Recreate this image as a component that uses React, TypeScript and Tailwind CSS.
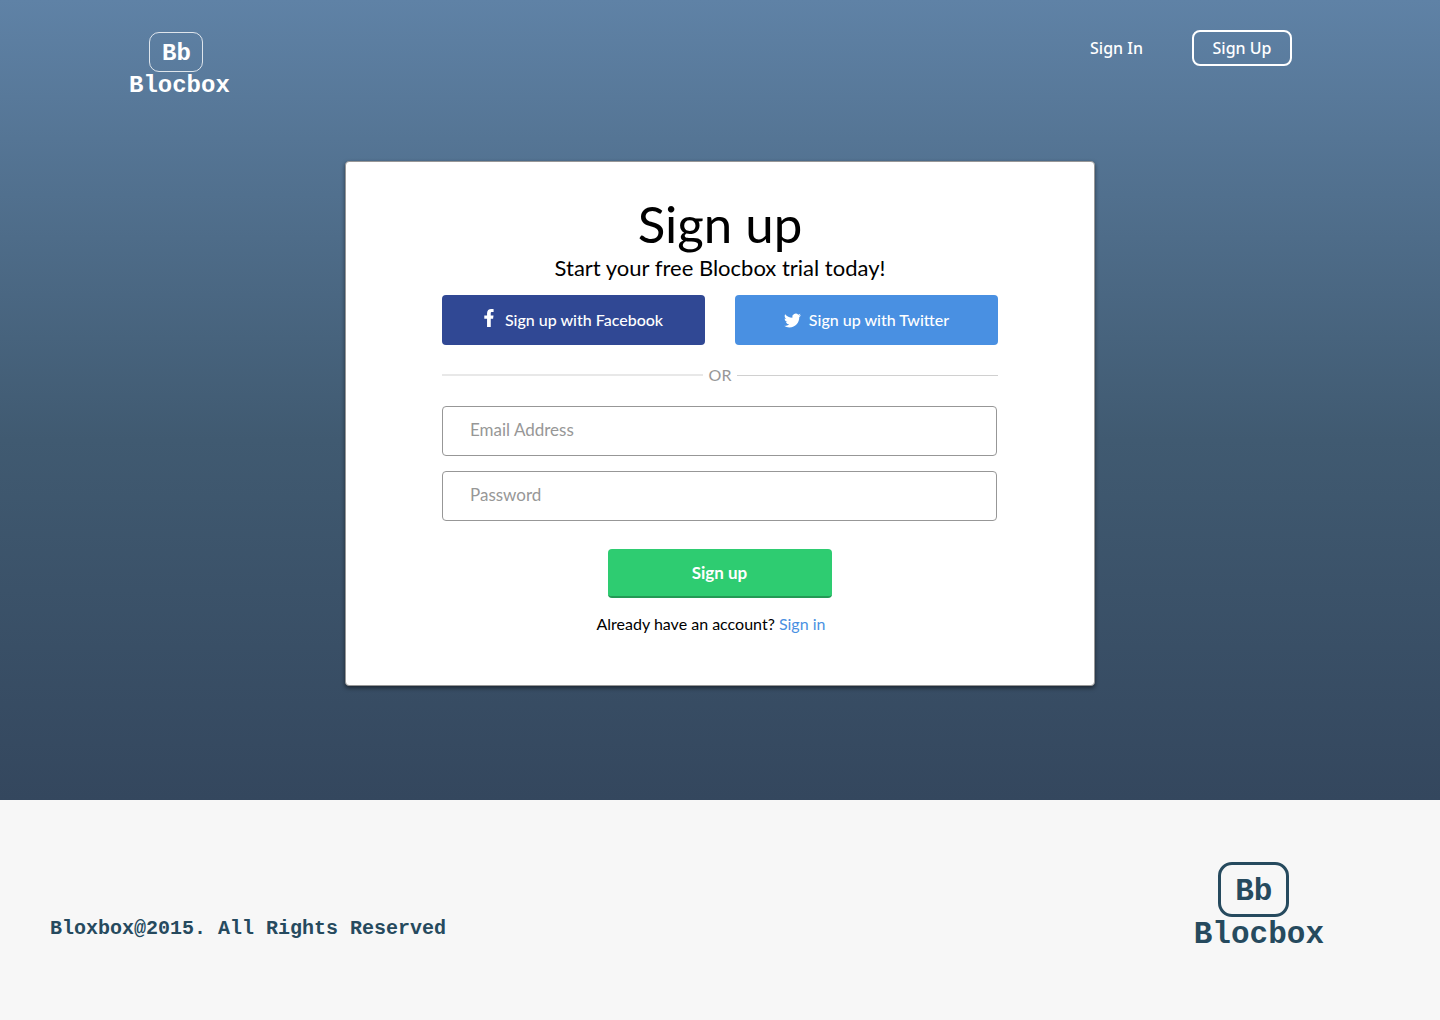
type LogoProps = { size: 'small' | 'large' };

function Logo({ size }: LogoProps) {
  const small = size === 'small';
  return (
    <a
      href="#"
      aria-label="Blocbox home"
      className={
        small
          ? 'flex flex-col items-center text-2xl leading-7 text-white'
          : 'flex flex-col items-center text-[31px] leading-9 text-[#264a5e]'
      }
    >
      <span
        className={
          small
            ? 'mr-1.5 flex h-10 w-[54px] items-center justify-center rounded-[10px] border border-white/80 pt-1'
            : 'mr-2.5 flex h-[55px] w-[71px] items-center justify-center rounded-[14px] border-3 border-[#264a5e] pt-1'
        }
      >
        Bb
      </span>
      <span>Blocbox</span>
    </a>
  );
}

function FacebookIcon() {
  return (
    <svg viewBox="0 0 10 18" className="mb-1 h-[18px] w-[10px]" fill="currentColor" aria-hidden="true">
      <path d="M9.6.15v2.95H8.1c-1.1 0-1.35.52-1.35 1.42v2h2.75l-.42 3.18H6.75V18H3.05V9.7H.3V6.52h2.75V4.2C3.05 1.47 4.72 0 7.15 0c1.16 0 2.16.08 2.45.15z" />
    </svg>
  );
}

function TwitterIcon() {
  return (
    <svg viewBox="0 0 24 24" className="size-[17px]" fill="currentColor" aria-hidden="true">
      <path d="M23.954 4.569a10 10 0 0 1-2.825.775 4.958 4.958 0 0 0 2.163-2.723 9.99 9.99 0 0 1-3.127 1.184 4.92 4.92 0 0 0-8.384 4.482C7.691 8.094 4.066 6.13 1.64 3.161a4.822 4.822 0 0 0-.666 2.475c0 1.71.87 3.213 2.188 4.096a4.904 4.904 0 0 1-2.228-.616v.061a4.923 4.923 0 0 0 3.946 4.827 4.996 4.996 0 0 1-2.212.085 4.937 4.937 0 0 0 4.604 3.417 9.868 9.868 0 0 1-6.102 2.105c-.39 0-.779-.023-1.17-.067a13.995 13.995 0 0 0 7.557 2.209c9.054 0 13.999-7.496 13.999-13.986 0-.209 0-.42-.015-.63a9.936 9.936 0 0 0 2.457-2.548z" />
    </svg>
  );
}

const inputClass =
  'block h-[50px] w-full rounded border border-[#979797] bg-white px-[27px] pb-1 text-[17px] text-black placeholder:text-[#979797] placeholder:opacity-100';

export default function App() {
  return (
    <div className="bg-[#f7f7f7] font-['Lato',sans-serif]">
      <div className="bg-linear-to-b from-[#5f82a6] via-[#405a71] via-55% to-[#34475e] pb-[114px]">
        <header className="flex h-24 items-start justify-between pt-8 pr-[148px] pl-[129px]">
          <div className="font-['Liberation_Mono',monospace] font-bold">
            <Logo size="small" />
          </div>
          <nav className="-mt-0.5 flex items-center gap-[49px] font-['Noto_Sans',sans-serif] text-base font-medium text-white">
            <a href="#">Sign In</a>
            <a href="#" className="flex h-9 w-[100px] items-center justify-center rounded-lg border-2 border-white">
              Sign Up
            </a>
          </nav>
        </header>

        <main className="mx-auto mt-[65px] w-full max-w-[750px] rounded border border-[#979797] bg-white px-24 pt-8 pb-[49px] text-black shadow-[0_2px_4px_rgba(0,0,0,0.5)]">
          <h1 className="text-center text-[51px] leading-[60px]">Sign up</h1>
          <p className="text-center text-[22px] leading-7">Start your free Blocbox trial today!</p>

          <div className="mt-[13px] grid grid-cols-2 gap-[30px]">
            <button type="button" className="flex h-[50px] items-center justify-center gap-[11px] rounded bg-[#304894] text-base font-medium text-white">
              <FacebookIcon />
              Sign up with Facebook
            </button>
            <button type="button" className="flex h-[50px] items-center justify-center gap-2 rounded bg-[#4990e2] text-base font-medium text-white">
              <TwitterIcon />
              Sign up with Twitter
            </button>
          </div>

          <div className="mt-[18px] mb-[19px] flex items-center gap-1.5 text-base leading-6 text-[#979797]">
            <span className="h-0.5 flex-1 bg-[#e8e8e8]" />
            OR
            <span className="h-px flex-1 bg-[#d0d0d0]" />
          </div>

          <form className="pr-px" onSubmit={(e) => e.preventDefault()}>
            <div className="space-y-[15px]">
              <input type="email" aria-label="Email Address" placeholder="Email Address" className={inputClass} />
              <input type="password" aria-label="Password" placeholder="Password" className={inputClass} />
            </div>
            <button
              type="submit"
              className="mx-auto mt-7 block h-[49px] w-56 rounded border-b-2 border-[#239a55] bg-[#2ecc71] text-[17px] font-bold text-white"
            >
              Sign up
            </button>
          </form>

          <p className="mt-3.5 pr-[18px] text-center text-base leading-6">
            Already have an account?{' '}
            <a href="#" className="text-[#4990e2]">
              Sign in
            </a>
          </p>
        </main>
      </div>

      <footer className="flex items-end justify-between pt-[62px] pr-[116px] pb-[67px] pl-[50px] font-['Liberation_Mono',monospace] font-bold">
        <p className="pb-2.5 text-xl leading-7 text-[#264a5e]">Bloxbox@2015. All Rights Reserved</p>
        <Logo size="large" />
      </footer>
    </div>
  );
}
